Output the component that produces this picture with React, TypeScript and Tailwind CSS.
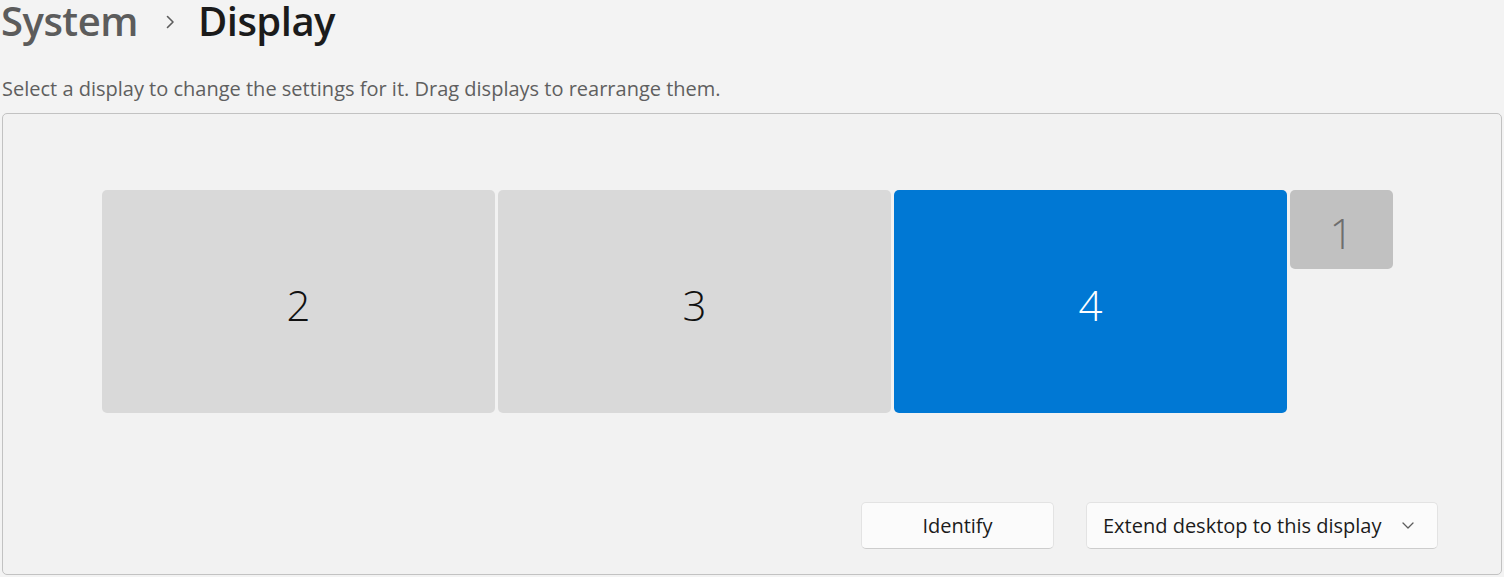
import React from "react";

const monitors = [
  { id: "2", w: "w-[393px]", h: "h-[223px]", tone: "bg-[#d9d9d9] text-[#111111]" },
  { id: "3", w: "w-[393px]", h: "h-[223px]", tone: "bg-[#d9d9d9] text-[#111111]" },
  { id: "4", w: "w-[393px]", h: "h-[223px]", tone: "bg-[#0078d4] text-white" },
  { id: "1", w: "w-[103px]", h: "h-[79px]", tone: "bg-[#c1c1c1] text-[#6e6e6e]" },
];

export default function App() {
  return (
    <div
      className="w-[1504px] h-[577px] overflow-hidden bg-[#f3f3f3] text-[#1b1b1b]"
      style={{ fontFamily: '"Open Sans", "Noto Sans", sans-serif' }}
    >
      {/* breadcrumb */}
      <div className="flex items-center h-[41px] pt-[1px] pl-[1px]">
        <span className="text-[40px] font-semibold leading-none text-[#5c5c5c] tracking-[-0.5px]">System</span>
        <svg className="ml-[27px] mr-[23px] mt-[1px]" width="10" height="14" viewBox="0 0 10 14" fill="none">
          <path d="M2.5 1.5 L8 7 L2.5 12.5" stroke="#5c5c5c" strokeWidth="1.6" strokeLinecap="round" strokeLinejoin="round" />
        </svg>
        <span className="text-[40px] font-semibold leading-none text-[#1b1b1b] tracking-[-0.5px]">Display</span>
      </div>

      <p className="mt-[36px] pl-[2px] text-[20px] leading-[24px] text-[#5f5f5f]">
        Select a display to change the settings for it. Drag displays to rearrange them.
      </p>

      {/* arrangement panel */}
      <div className="ml-[2px] mt-[12px] w-[1500px] h-[462px] rounded-[5px] border-[1.5px] border-[#c2c2c2] bg-[#f2f2f2] pt-[76px] pl-[99px]">
        <div className="flex items-start gap-[3px]">
          {monitors.map((m) => (
            <div
              key={m.id}
              className={`${m.w} ${m.h} ${m.tone} rounded-[5px] flex items-center justify-center pt-[6px]`}
            >
              <span className="text-[42px] font-light leading-none">{m.id}</span>
            </div>
          ))}
        </div>

        <div className="mt-[89px] flex justify-end gap-[32px] pr-[63px]">
          <button className="w-[193px] h-[47px] rounded-[5px] border border-[#e3e3e3] border-b-[#cdcdcd] bg-[#fbfbfb] text-[20px] text-[#1b1b1b]">
            Identify
          </button>
          <button className="w-[352px] h-[47px] rounded-[5px] border border-[#e3e3e3] border-b-[#cdcdcd] bg-[#fbfbfb] flex items-center pl-[16px] pr-[23px] text-[20px] text-[#1b1b1b]">
            <span className="flex-1 text-left">Extend desktop to this display</span>
            <svg width="12" height="7" viewBox="0 0 12 7" fill="none">
              <path d="M1 1 L6 6 L11 1" stroke="#5c5c5c" strokeWidth="1.3" strokeLinecap="round" strokeLinejoin="round" />
            </svg>
          </button>
        </div>
      </div>
    </div>
  );
}
